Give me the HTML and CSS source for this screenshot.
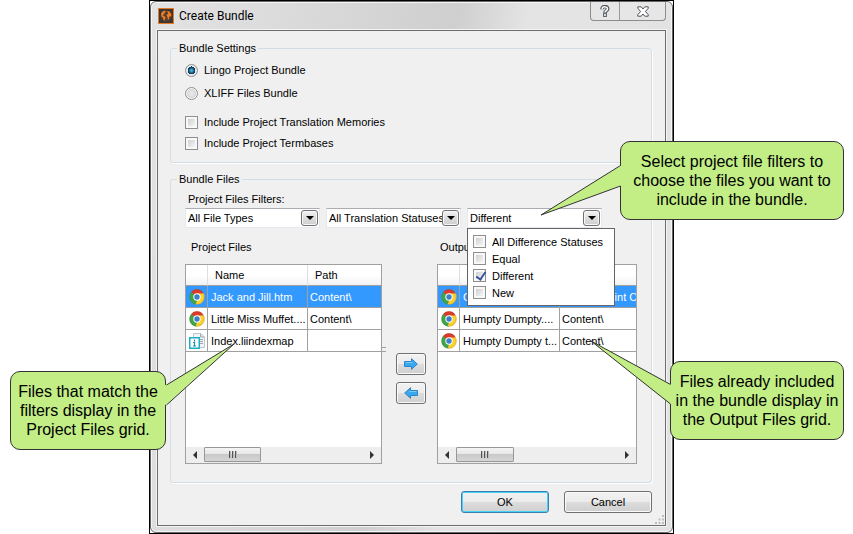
FILE: index.html
```html
<!DOCTYPE html>
<html lang="en">
<head>
<meta charset="utf-8">
<title>Create Bundle</title>
<link rel="stylesheet" href="styles.css">
</head>
<body>
<svg class="defs" aria-hidden="true">
  <symbol id="chrome" viewBox="0 0 16 16">
    <path d="M8 8 1.4 4.2A7.5 7.5 0 0 1 14.6 4.4z" fill="#dc3a2c"/>
    <path d="M8 8 14.5 4.3A7.5 7.5 0 0 1 7.6 15.5z" fill="#fbd130"/>
    <path d="M8 8 7.8 15.5A7.5 7.5 0 0 1 1.4 4.2z" fill="#3fa648"/>
    <path d="M8 4.4h6.6A7.5 7.5 0 0 1 15.4 7L11 7.5z" fill="#fbd130"/>
    <path d="M11.2 9.8 7.8 15.5 6.5 15.3 8.6 11z" fill="#fbd130"/>
    <path d="M4.8 9.8 1.4 4.2 2.4 3 6 6.5z" fill="#3fa648"/>
    <circle cx="8" cy="8" r="7.3" fill="none" stroke="#6b4a28" stroke-opacity=".35" stroke-width=".6"/>
    <circle cx="8" cy="8" r="3.7" fill="#fff"/>
    <circle cx="8" cy="8" r="2.7" fill="#3b7fc8"/>
  </symbol>
  <symbol id="indexmap" viewBox="0 0 16 16">
    <path d="M4.500.5h7.500l3.500 3.500v10.500h-11z" fill="#f1f4f7" stroke="#c0c6cd"/>
    <path d="M11.500.5v3.500h4" fill="#d6dde4" stroke="#a4abb3"/>
    <path d="M11 6.500h3M11 8.500h3M11 10.500h3" stroke="#9aa5b2"/>
    <rect x=".75" y="4.750" width="9.500" height="10.500" fill="#fff" stroke="#1cb0c8" stroke-width="1.500"/>
    <path d="M5.500 6.500v2M5.500 9v4.500M4 9.500h2M4 13h3" stroke="#1d8fa8" stroke-width="1.200"/>
  </symbol>
  <symbol id="down" viewBox="0 0 8 4"><path d="M0 0h8L4 4z" fill="#000"/></symbol>
  <symbol id="left" viewBox="0 0 4 8"><path d="M4 0v8L0 4z" fill="#333"/></symbol>
  <symbol id="right" viewBox="0 0 4 8"><path d="M0 0v8l4-4z" fill="#333"/></symbol>
</svg>

<main class="frame">
  <section class="window">
    <header class="titlebar">
      <svg class="app-icon" viewBox="0 0 16 16" aria-hidden="true">
        <rect x=".5" y=".5" width="15" height="15" fill="#3b3735" stroke="#e8791e"/>
        <circle cx="8" cy="8" r="5.500" fill="#57402f"/>
        <path d="M3 5.400 4.800 3.200 7.200 2.600 7.600 4 6.400 5 6 6.400 4.600 7 5.600 8 7.400 8.800 7.200 10.400 6.400 12.800 5.400 11.600 5 9.600 3.400 8.400z" fill="#ef7d22"/>
        <path d="M9 3 11.400 3.600 13.200 6 13.400 8.400 12.200 8 11.200 9.200 10.800 11.400 9.800 11.600 9.600 9.200 8.600 7.800 9 6.400 10.400 5.800z" fill="#ef7d22"/>
      </svg>
      <h1>Create Bundle</h1>
      <div class="caption-buttons">
        <button type="button" class="help" aria-label="Help">
          <svg viewBox="0 0 10 12" width="10" height="12"><path d="M2 4.200C2 .6 8 .8 7.600 4 7.400 5.600 5 5.800 5 8" fill="none" stroke="#50555d" stroke-width="3.600"/><path d="M2.100 3.800C2.400 1.200 7.800 1.200 7.500 4 7.200 5.600 5 5.800 5 7.600" fill="none" stroke="#fff" stroke-width="1.500"/><rect x="3.600" y="8.700" width="2.800" height="2.700" fill="#fff" stroke="#50555d"/></svg>
        </button>
        <button type="button" class="close" aria-label="Close">
          <svg viewBox="0 0 12 11" width="12" height="11"><path d="M.8.8h3.400L6 3 7.800.8h3.400v1.500L8.400 5.500l2.800 3.200v1.500H7.800L6 8 4.200 10.200H.8V8.700L3.600 5.500.8 2.300z" fill="#fff" stroke="#50555d"/></svg>
        </button>
      </div>
    </header>

    <form class="client">
      <fieldset>
        <legend>Bundle Settings</legend>
        <div class="options">
          <label><input type="radio" name="kind" checked>Lingo Project Bundle</label>
          <label><input type="radio" name="kind">XLIFF Files Bundle</label>
          <div class="includes">
            <label><input type="checkbox">Include Project Translation Memories</label>
            <label><input type="checkbox">Include Project Termbases</label>
          </div>
        </div>
      </fieldset>

      <fieldset class="files">
        <legend>Bundle Files</legend>
        <div class="files-body">
          <label class="filters-label" for="types">Project Files Filters:</label>
          <div class="filters">
            <div class="combo">
              <select id="types"><option>All File Types</option></select>
              <span class="drop"><svg width="8" height="4"><use href="#down"/></svg></span>
            </div>
            <div class="combo">
              <select aria-label="Translation status"><option>All Translation Statuses</option></select>
              <span class="drop"><svg width="8" height="4"><use href="#down"/></svg></span>
            </div>
            <div class="combo">
              <select aria-label="Difference status"><option>Different</option></select>
              <span class="drop"><svg width="8" height="4"><use href="#down"/></svg></span>
              <div class="popup">
                <label><input type="checkbox">All Difference Statuses</label>
                <label><input type="checkbox">Equal</label>
                <label><input type="checkbox" checked>Different</label>
                <label><input type="checkbox">New</label>
              </div>
            </div>
          </div>

          <div class="panes">
            <section class="pane">
              <h2>Project Files</h2>
              <div class="grid">
                <table>
                  <colgroup><col class="c-icon"><col class="c-name"><col></colgroup>
                  <thead><tr><th></th><th>Name</th><th>Path</th></tr></thead>
                  <tbody>
                    <tr class="selected"><td><svg><use href="#chrome"/></svg></td><td>Jack and Jill.htm</td><td>Content\</td></tr>
                    <tr><td><svg><use href="#chrome"/></svg></td><td>Little Miss Muffet....</td><td>Content\</td></tr>
                    <tr><td><svg><use href="#indexmap"/></svg></td><td>Index.liindexmap</td><td></td></tr>
                  </tbody>
                </table>
                <div class="scrollbar">
                  <button type="button" aria-label="Scroll left"><svg width="4" height="8"><use href="#left"/></svg></button>
                  <div class="track"><div class="thumb"><i></i><i></i><i></i></div></div>
                  <button type="button" aria-label="Scroll right"><svg width="4" height="8"><use href="#right"/></svg></button>
                </div>
              </div>
            </section>
            <div class="movers">
              <span class="splitter"></span>
              <button type="button" aria-label="Add to output"><svg viewBox="0 0 14 12" width="14" height="12"><path d="M.5 3.500h7V.7L13.300 6 7.500 11.300V8.500h-7z" fill="#38a9ee" stroke="#2f83c9"/><path d="M1.500 4.500h7" stroke="#7fcbf6"/></svg></button>
              <button type="button" aria-label="Remove from output"><svg viewBox="0 0 14 12" width="14" height="12"><path d="M13.500 3.500h-7V.7L.7 6l5.800 5.300V8.500h7z" fill="#38a9ee" stroke="#2f83c9"/><path d="M5.500 4.500h7" stroke="#7fcbf6"/></svg></button>
            </div>
            <section class="pane output">
              <h2>Output Files</h2>
              <div class="grid">
                <table>
                  <colgroup><col class="c-icon"><col class="c-name"><col></colgroup>
                  <thead><tr><th></th><th></th><th></th></tr></thead>
                  <tbody>
                    <tr class="selected"><td><svg><use href="#chrome"/></svg></td><td>C</td><td>Content\Print O</td></tr>
                    <tr><td><svg><use href="#chrome"/></svg></td><td>Humpty Dumpty....</td><td>Content\</td></tr>
                    <tr><td><svg><use href="#chrome"/></svg></td><td>Humpty Dumpty t...</td><td>Content\</td></tr>
                  </tbody>
                </table>
                <div class="scrollbar">
                  <button type="button" aria-label="Scroll left"><svg width="4" height="8"><use href="#left"/></svg></button>
                  <div class="track"><div class="thumb"><i></i><i></i><i></i></div></div>
                  <button type="button" aria-label="Scroll right"><svg width="4" height="8"><use href="#right"/></svg></button>
                </div>
              </div>
            </section>
          </div>
        </div>
      </fieldset>

      <div class="actions">
        <button type="button" class="push default">OK</button>
        <button type="button" class="push">Cancel</button>
      </div>
      <svg class="grip" viewBox="0 0 9 9" aria-hidden="true"><path d="M7 0h2v2H7zM7 3.500h2v2H7zM3.500 3.500h2v2h-2zM7 7h2v2H7zM3.500 7h2v2h-2zM0 7h2v2H0z" fill="#bdbdbd"/></svg>
    </form>
  </section>
</main>

<aside class="callout filters-note">
  <svg class="tail" viewBox="0 0 82 52" aria-hidden="true"><path d="M82 24 80 25 1 74 80 45 82 45z" class="fill"/><path d="M80.500 24.500 1 74 80.500 45" class="line"/></svg>
  <p>Select project file filters to<br>choose the files you want to<br>include in the bundle.</p>
</aside>
<aside class="callout project-note">
  <svg class="tail" viewBox="0 0 70 63" aria-hidden="true"><path d="M0 42 2 41.500 69 1 2 61 0 62z" class="fill"/><path d="M1.500 42 69 1 1.500 62" class="line"/></svg>
  <p>Files that match the<br>filters display in the<br>Project Files grid.</p>
</aside>
<aside class="callout output-note">
  <svg class="tail" viewBox="0 0 82 66" aria-hidden="true"><path d="M82 44 80 44 1 1 80 64 82 64z" class="fill"/><path d="M80.500 44.500 1 1 80.500 64" class="line"/></svg>
  <p>Files already included<br>in the bundle display in<br>the Output Files grid.</p>
</aside>
</body>
</html>
```
FILE: styles.css
```css
* { box-sizing: border-box; }

body {
  position: relative;
  margin: 0;
  padding: 0 179px 0 149px;
  background: #fff;
  color: #000;
  font: 11px/14px "Liberation Sans", Arial, sans-serif;
}

.defs { position: absolute; width: 0; height: 0; }
button, select, input { margin: 0; font: inherit; color: inherit; }
svg { display: block; flex: none; }
h1, h2, p { margin: 0; font-weight: normal; }

.frame { border: 1px solid #000; background: #fff; }

.window {
  padding: 0 6px 6px;
  border: 1px solid #666;
  border-radius: 6px;
  background: linear-gradient(100deg, #e2e2e2 0, #dcdcdc 20%, #cfcfcf 50%, #e4e4e4 62%, #e2e2e2 100%);
  box-shadow: inset 0 0 0 1px #f6f6f6;
}

.titlebar { display: flex; align-items: center; height: 28px; padding-left: 1px; }
.app-icon { width: 16px; height: 16px; }
.titlebar h1 { flex: 1; padding-left: 5px; font: 12px/16px Roboto, sans-serif; }

.caption-buttons {
  display: flex;
  align-self: flex-start;
  height: 19px;
  border: 1px solid #8c8c8c;
  border-top: 0;
  border-radius: 0 0 4px 4px;
  background: #e6e6e6;
}
.caption-buttons button { display: grid; place-items: center; padding: 0; border: 0; background: none; }
.help { width: 28px; }
.caption-buttons .close { width: 46px; border-left: 1px solid #9a9a9a; }

.client {
  position: relative;
  padding: 10px 13px 12px 12px;
  border: 1px solid #6d6d6d;
  background: #f0f0f0;
  box-shadow: 0 0 0 1px #f4f4f4;
}

fieldset {
  min-width: 0;
  margin: 0;
  padding: 0 14px 0 6px;
  border: 1px solid #d3dde6;
  border-radius: 3px;
  box-shadow: 1px 1px 0 #fff;
}
.files { margin-top: 9px; }
legend { padding: 0 2px; line-height: 14px; }

.options { display: flex; flex-direction: column; align-items: flex-start; gap: 9px; padding: 8px 8px 12px; }
.options label, .popup label { display: flex; align-items: center; }
.options label { gap: 6px; }
.includes { display: flex; flex-direction: column; gap: 7px; padding-top: 6px; }

input { appearance: none; flex: none; width: 13px; height: 13px; }
input[type="checkbox"] {
  position: relative;
  padding: 2px;
  border: 1px solid #8e8f8f;
  background: linear-gradient(135deg, #cdd0d4, #f4f4f4) content-box, #f8f8f8;
}
input[type="checkbox"]:checked::after {
  content: "";
  position: absolute;
  left: 4px;
  top: 0;
  width: 4px;
  height: 8px;
  border: solid #3a529b;
  border-width: 0 2px 2px 0;
  transform: rotate(35deg);
}
input[type="radio"] {
  border: 1px solid #8e8f8f;
  border-radius: 50%;
  background: radial-gradient(circle, #e6e6e6 0 2px, #d2d5d8 4px, #f6f6f6 5px);
}
input[type="radio"]:checked {
  background: radial-gradient(circle, #5cbde2 0, #2478a4 2px, #12405f 3px, #12405f 4px, #e6e8ea 4px);
}

.files-body { padding: 6px 0 18px 8px; }
.filters-label { display: block; padding: 0 0 2px 3px; line-height: 14px; }
.filters { display: flex; gap: 6px; }
.combo { position: relative; flex: 0 1 135px; }
.combo select {
  display: block;
  appearance: none;
  width: 100%;
  height: 20px;
  padding: 0 16px 0 2px;
  border: 1px solid #e3e9ef;
  border-top-color: #abadb3;
  border-radius: 0;
  background: #fff;
}
.drop {
  position: absolute;
  top: 2px;
  right: 2px;
  display: grid;
  place-items: center;
  width: 17px;
  height: 16px;
  border: 1px solid #707070;
  border-radius: 3px;
  background: linear-gradient(#f2f2f2, #ddd 50%, #cfcfcf);
  box-shadow: inset 0 0 0 1px #f8f8f8;
  pointer-events: none;
}
.popup {
  position: absolute;
  z-index: 2;
  top: 20px;
  left: 0;
  width: 148px;
  padding: 4px 5px;
  border: 1px solid #646464;
  background: #fff;
}
.popup label { gap: 6px; height: 17px; }

.panes { display: grid; grid-template-columns: 197fr 55px 200fr; padding-top: 12px; }
.pane { min-width: 0; }
.pane h2 { padding: 0 0 10px 6px; font-size: 11px; line-height: 14px; }
.output h2 { padding-left: 3px; }
.grid {
  display: flex;
  flex-direction: column;
  justify-content: space-between;
  min-height: 200px;
  border: 1px solid #a0a0a0;
  background: #fff;
}

table { width: 100%; table-layout: fixed; border-collapse: separate; border-spacing: 0; }
.c-icon { width: 22px; }
.c-name { width: 100px; }
th, td {
  overflow: hidden;
  padding: 0 0 0 3px;
  border-right: 1px solid #a0a0a0;
  border-bottom: 1px solid #a0a0a0;
  text-align: left;
  white-space: nowrap;
}
th {
  height: 21px;
  padding-left: 7px;
  border-right-color: #dedfe1;
  background: linear-gradient(#fff 50%, #f1f2f4);
  font-weight: normal;
}
td { height: 22px; }
th:last-child, td:last-child { border-right: 0; }
td:last-child { padding-left: 2px; }
td svg { width: 16px; height: 16px; }
.selected td { background: #39f; color: #fff; }

.scrollbar { display: flex; height: 16px; background: #eee; }
.scrollbar button { display: grid; place-items: center; width: 18px; padding: 0; border: 0; background: none; }
.track { flex: 1; }
.thumb {
  display: flex;
  align-items: center;
  justify-content: center;
  gap: 1px;
  width: 36%;
  height: 15px;
  border: 1px solid #979797;
  border-radius: 1px;
  background: linear-gradient(#f4f4f4, #e6e6e6 50%, #c9c9c9 50%, #d6d6d6);
}
.thumb i { width: 2px; height: 7px; background: linear-gradient(90deg, #555 50%, #bbb 50%); }

.movers { position: relative; display: flex; flex-direction: column; align-items: center; gap: 7px; padding: 113px 0 0 3px; }
.movers button {
  display: grid;
  place-items: center;
  width: 30px;
  height: 22px;
  padding: 0;
}
.movers button, .push {
  border: 1px solid #707070;
  border-radius: 3px;
  background: linear-gradient(#f2f2f2, #ebebeb 50%, #ddd 50%, #cfcfcf);
  box-shadow: inset 0 0 0 1px #fafafa;
}
.splitter {
  position: absolute;
  top: 107px;
  left: -1px;
  width: 5px;
  height: 5px;
  border: solid #a0a0a0;
  border-width: 1px 0;
}

.actions { display: flex; justify-content: flex-end; gap: 15px; padding-top: 8px; }
.push { width: 88px; height: 22px; padding: 0; }
.default { border-color: #3c7fb1; box-shadow: inset 0 0 0 1px #46d1f8; }
.grip { position: absolute; right: 1px; bottom: 1px; width: 9px; height: 9px; }

.callout {
  position: absolute;
  z-index: 3;
  display: grid;
  place-items: center;
  height: 79px;
  border: 1px solid #333;
  border-radius: 10px;
  background: #c2ee85;
  font-size: 16px;
  line-height: 19px;
  text-align: center;
  white-space: nowrap;
}
.filters-note { top: 141px; right: 9px; width: 224px; }
.project-note { top: 371px; left: 10px; width: 156px; }
.output-note { top: 361px; right: 9px; width: 174px; }

.tail { position: absolute; overflow: visible; }
.tail .fill { fill: #c2ee85; }
.tail .line { fill: none; stroke: #333; stroke-width: 1; }
.filters-note .tail { top: -1px; left: -81px; width: 82px; height: 52px; }
.project-note .tail { top: -29px; right: -70px; width: 70px; height: 63px; }
.output-note .tail { top: -22px; left: -81px; width: 82px; height: 66px; }
```
